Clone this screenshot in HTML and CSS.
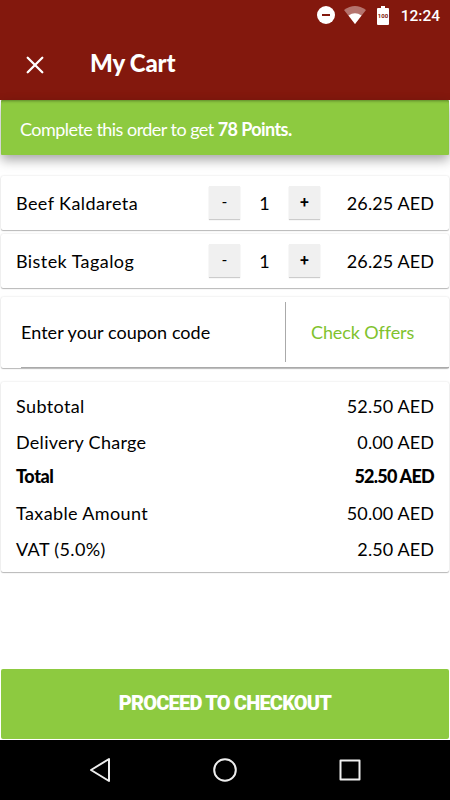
FILE: index.html
```html
<!DOCTYPE html>
<html lang="en">
<head>
    <meta charset="UTF-8">
    <meta name="viewport" content="width=device-width, initial-scale=1.0">
    <title>My Cart</title>
    <link rel="stylesheet" href="styles.css">
</head>
<body>
    <header>
        <div class="status-bar">
            <svg class="dnd" width="18" height="18" viewBox="0 0 18 18">
                <circle cx="9" cy="9" r="9" fill="#fff"/>
                <rect x="5" y="8" width="8" height="2" fill="#83180d"/>
            </svg>
            <svg class="wifi" width="22" height="18" viewBox="0 0 22 18">
                <path d="M0 4Q11-4 22 4L11 18Z" fill="#b5746e"/>
                <path d="M4.5 9.5Q11 5 17.5 9.5L11 18Z" fill="#fff"/>
            </svg>
            <svg class="battery" width="12" height="19" viewBox="0 0 12 19">
                <path d="M4 0h4v2h3q1 0 1 1v15q0 1-1 1H1q-1 0-1-1V3q0-1 1-1h3Z" fill="#fff"/>
                <text x="6" y="12" text-anchor="middle">100</text>
            </svg>
            <span class="clock">12:24</span>
        </div>
        <div class="title-bar">
            <svg width="18" height="18" viewBox="0 0 18 18" fill="none" stroke="#fff" stroke-width="2.3" stroke-linecap="round">
                <path d="M1.7 1.7l14.6 14.6M16.3 1.7L1.7 16.3"/>
            </svg>
            <h1>My Cart</h1>
        </div>
    </header>

    <main>
        <div class="points">Complete this order to get&nbsp;<strong>78 Points.</strong></div>

        <div class="card item">
            <span class="name">Beef Kaldareta</span>
            <button class="qty-btn minus">-</button>
            <span class="qty">1</span>
            <button class="qty-btn">+</button>
            <span class="price">26.25 AED</span>
        </div>
        <div class="card item">
            <span class="name">Bistek Tagalog</span>
            <button class="qty-btn minus">-</button>
            <span class="qty">1</span>
            <button class="qty-btn">+</button>
            <span class="price">26.25 AED</span>
        </div>

        <div class="card coupon">
            <div class="coupon-row">
                <span class="code">Enter your coupon code</span>
                <a class="offers">Check Offers</a>
            </div>
        </div>

        <div class="card summary">
            <div class="row"><span>Subtotal</span><span class="price">52.50 AED</span></div>
            <div class="row delivery"><span>Delivery Charge</span><span class="price">0.00 AED</span></div>
            <div class="row total"><span>Total</span><span class="amount">52.50 AED</span></div>
            <div class="row"><span>Taxable Amount</span><span class="price">50.00 AED</span></div>
            <div class="row"><span>VAT (5.0%)</span><span class="price">2.50 AED</span></div>
        </div>
    </main>

    <button class="checkout">PROCEED TO CHECKOUT</button>

    <nav>
        <svg width="22" height="26" viewBox="0 0 22 26" fill="none" stroke="#eee" stroke-width="2" stroke-linejoin="round">
            <path d="M20 2v22L2 13Z"/>
        </svg>
        <svg width="26" height="26" viewBox="0 0 26 26" fill="none" stroke="#eee" stroke-width="2">
            <circle cx="13" cy="13" r="10.8"/>
        </svg>
        <svg width="22" height="22" viewBox="0 0 22 22" fill="none" stroke="#eee" stroke-width="2" stroke-linejoin="round">
            <rect x="1.5" y="1.5" width="19" height="19"/>
        </svg>
    </nav>
</body>
</html>
```
FILE: styles.css
```css
* {
    box-sizing: border-box;
}
body {
    margin: 0;
    height: 800px;
    display: flex;
    flex-direction: column;
    font-family: Lato, sans-serif;
    font-size: 18px;
    color: #000;
    background-color: #fff;
    overflow: hidden;
}
header {
    height: 100px;
    background-color: #83180d;
    color: white;
}
.status-bar {
    display: flex;
    justify-content: flex-end;
    align-items: center;
    height: 30px;
    padding-right: 10px;
}
.dnd {
    margin-right: 9px;
}
.wifi {
    margin-right: 11px;
}
.battery {
    margin-right: 12px;
}
.battery text {
    font: bold 6px Roboto, sans-serif;
    fill: #83180d;
}
.clock {
    font: 500 15.5px Roboto, sans-serif;
    padding-top: 1px;
}
.title-bar {
    display: flex;
    align-items: center;
    gap: 46px;
    height: 70px;
    padding-left: 26px;
}
h1 {
    margin: -5px 0 0;
    font-size: 24px;
    font-weight: 900;
    letter-spacing: -0.2px;
}
main {
    flex: 1;
}
.points {
    display: flex;
    align-items: center;
    height: 55px;
    margin: 0 1px 21px;
    padding: 2px 19px 0;
    background-color: #8dca40;
    color: white;
    letter-spacing: -0.53px;
    border-radius: 1px;
    box-shadow: 0 5px 12px rgba(0, 0, 0, 0.35), inset 0 3px 3px -2px rgba(0, 0, 0, 0.35);
}
.points strong {
    letter-spacing: -0.6px;
}
.card {
    margin: 0 1px;
    border-radius: 2px;
    background-color: white;
    box-shadow: 0 1px 1px rgba(0, 0, 0, 0.25), 0 0 2px rgba(0, 0, 0, 0.15);
}
.item {
    display: flex;
    align-items: center;
    height: 54px;
    padding: 0 15px;
    margin-bottom: 4px;
}
.name {
    width: 193px;
    letter-spacing: 0.42px;
}
.qty-btn {
    width: 31px;
    height: 33px;
    margin-top: -2px;
    padding: 0;
    border: none;
    background-color: #f0f0f0;
    box-shadow: 0 1px 1px rgba(0, 0, 0, 0.2);
    font: 500 16px Roboto, sans-serif;
    color: #000;
}
.minus {
    font-weight: 400;
}
.qty {
    width: 49px;
    text-align: center;
}
.price {
    margin-left: auto;
    letter-spacing: 0.1px;
}
.coupon {
    height: 71px;
    margin-top: 9px;
    padding-left: 20px;
}
.coupon-row {
    display: flex;
    align-items: center;
    height: 71px;
    border-bottom: 1px solid #aaa;
}
.code {
    width: 264px;
    letter-spacing: 0.05px;
}
.offers {
    display: flex;
    align-items: center;
    height: 60px;
    padding-left: 25px;
    border-left: 1px solid #aaa;
    color: #80c22d;
    letter-spacing: -0.1px;
}
.summary {
    height: 190px;
    margin-top: 14px;
    padding: 6px 15px 0;
}
.row {
    display: flex;
    align-items: center;
    height: 36px;
    letter-spacing: 0.38px;
}
.delivery {
    height: 35px;
    letter-spacing: 0.27px;
}
.total {
    justify-content: space-between;
    padding-bottom: 3px;
    font-weight: 900;
    letter-spacing: -0.4px;
}
.total .amount {
    letter-spacing: -0.75px;
}
.checkout {
    height: 70px;
    margin: 0 1px 1px;
    padding: 0 0 2px;
    border: none;
    border-radius: 2px;
    background-color: #8dca40;
    color: white;
    font: 900 20px Roboto, sans-serif;
    letter-spacing: -0.8px;
}
nav {
    display: flex;
    justify-content: space-between;
    align-items: center;
    height: 60px;
    padding: 0 89px;
    background-color: #000;
}
```
